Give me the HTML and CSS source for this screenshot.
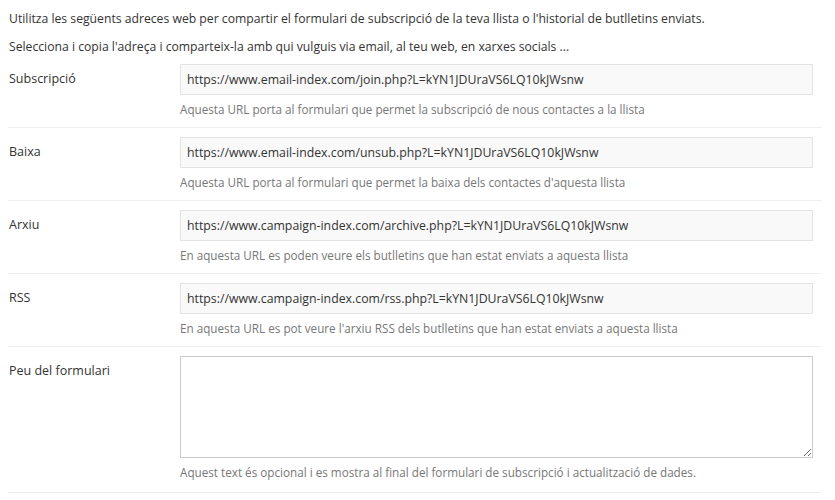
FILE: index.html
```html
<!DOCTYPE html>
<html lang="ca">
<head>
<meta charset="utf-8">
<title>Adreces web</title>
<link rel="stylesheet" href="styles.css">
</head>
<body>
<div class="wrap">
  <div class="intro">
    <p>Utilitza les següents adreces web per compartir el formulari de subscripció de la teva llista o l'historial de butlletins enviats.</p>
    <p>Selecciona i copia l'adreça i comparteix-la amb qui vulguis via email, al teu web, en xarxes socials ...</p>
  </div>
  <div class="row first">
    <div class="label">Subscripció</div>
    <div class="control">
      <div class="field">https://www.email-index.com/join.php?L=kYN1JDUraVS6LQ10kJWsnw</div>
      <div class="help">Aquesta URL porta al formulari que permet la subscripció de nous contactes a la llista</div>
    </div>
  </div>
  <div class="row">
    <div class="label">Baixa</div>
    <div class="control">
      <div class="field">https://www.email-index.com/unsub.php?L=kYN1JDUraVS6LQ10kJWsnw</div>
      <div class="help">Aquesta URL porta al formulari que permet la baixa dels contactes d'aquesta llista</div>
    </div>
  </div>
  <div class="row">
    <div class="label">Arxiu</div>
    <div class="control">
      <div class="field">https://www.campaign-index.com/archive.php?L=kYN1JDUraVS6LQ10kJWsnw</div>
      <div class="help">En aquesta URL es poden veure els butlletins que han estat enviats a aquesta llista</div>
    </div>
  </div>
  <div class="row">
    <div class="label">RSS</div>
    <div class="control">
      <div class="field">https://www.campaign-index.com/rss.php?L=kYN1JDUraVS6LQ10kJWsnw</div>
      <div class="help">En aquesta URL es pot veure l'arxiu RSS dels butlletins que han estat enviats a aquesta llista</div>
    </div>
  </div>
  <div class="row last">
    <div class="label">Peu del formulari</div>
    <div class="control">
      <textarea class="area"></textarea>
      <div class="help">Aquest text és opcional i es mostra al final del formulari de subscripció i actualització de dades.</div>
    </div>
  </div>
</div>
</body>
</html>
```

FILE: styles.css
```css
html, body {
  margin: 0;
  padding: 0;
  background: #fff;
}
body {
  font-family: "Open Sans", "DejaVu Sans", sans-serif;
  font-size: 12px;
  color: #333;
}
.wrap {
  margin: 0 14px 0 8px;
}
.intro p {
  margin: 10px 0 0 1px;
  line-height: 18px;
  font-size: 12.2px;
}
.row {
  display: flex;
  border-top: 1px solid #eee;
  padding: 9px 0 9px 0;
}
.row.first {
  border-top: 0;
  padding-top: 8px;
}
.row.last {
  border-bottom: 1px solid #eee;
  padding-bottom: 11px;
}
.label {
  width: 171px;
  flex: none;
  padding: 6px 0 0 1px;
  line-height: 18px;
  font-size: 12.5px;
}
.control {
  flex: 1;
  padding-right: 8px;
  min-width: 0;
}
.field {
  height: 29px;
  border: 1px solid #e3e3e3;
  background: #f9f9f9;
  padding: 0 6px;
  line-height: 29px;
  font-size: 12.3px;
  color: #333;
  white-space: nowrap;
  overflow: hidden;
}
.area {
  display: block;
  box-sizing: border-box;
  width: 100%;
  height: 102px;
  margin: 0;
  border: 1px solid #ccc;
  background: #fff;
  resize: vertical;
  font-family: inherit;
}
.help {
  margin-top: 5px;
  line-height: 18px;
  font-size: 11.7px;
  color: #777;
}
```
